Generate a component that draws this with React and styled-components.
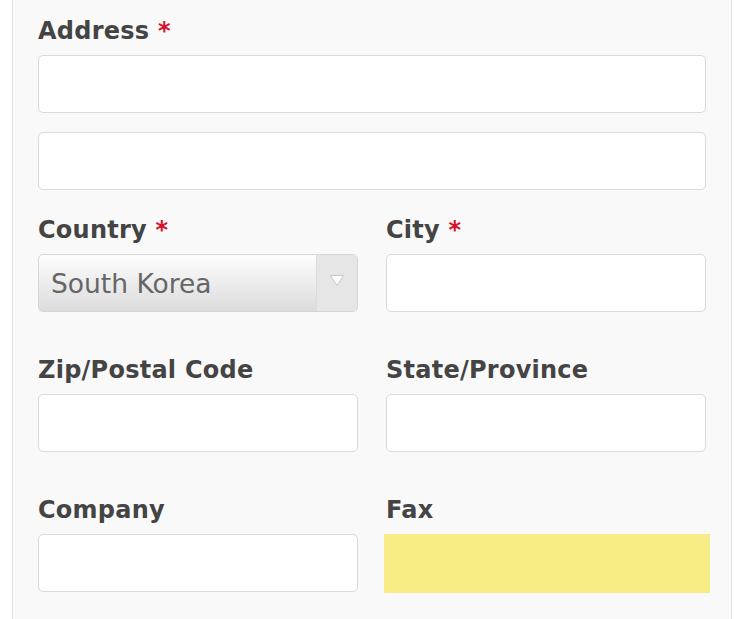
import styled, { createGlobalStyle } from 'styled-components';

const GlobalStyle = createGlobalStyle`
  html, body {
    margin: 0;
    padding: 0;
    background: #fff;
  }
  body {
    font-family: 'DejaVu Sans', Verdana, sans-serif;
  }
`;

export default function App() {
  return (
    <>
      <GlobalStyle />
      <Page>
        <Panel>
          <Group>
            <Label>
              Address <Required>*</Required>
            </Label>
            <Stack>
              <Input type='text' />
              <Input type='text' />
            </Stack>
          </Group>

          <Row>
            <Group>
              <Label>
                Country <Required>*</Required>
              </Label>
              <Select>
                <SelectValue>South Korea</SelectValue>
                <SelectArrow>
                  <svg width='16' height='13' viewBox='0 0 16 13'>
                    <path
                      d='M1.5 1.5h13L8 11.5z'
                      fill='#fff'
                      stroke='#c8c8c8'
                      strokeWidth='1'
                      strokeLinejoin='round'
                    />
                  </svg>
                </SelectArrow>
              </Select>
            </Group>
            <Group>
              <Label>
                City <Required>*</Required>
              </Label>
              <Input type='text' />
            </Group>
          </Row>

          <Row>
            <Group>
              <Label>Zip/Postal Code</Label>
              <Input type='text' />
            </Group>
            <Group>
              <Label>State/Province</Label>
              <Input type='text' />
            </Group>
          </Row>

          <Row>
            <Group>
              <Label>Company</Label>
              <Input type='text' />
            </Group>
            <Group>
              <Label>Fax</Label>
              <Input type='text' $highlight />
            </Group>
          </Row>
        </Panel>
      </Page>
    </>
  );
}

const Page = styled.div`
  display: flex;
  padding: 0 18px 0 12px;
  height: 619px;
  overflow: hidden;
`;

const Panel = styled.div`
  width: 720px;
  box-sizing: border-box;
  background: #f9f9f9;
  border-left: 1px solid #e4e4e4;
  border-right: 1px solid #e4e4e4;
  padding: 12px 25px 0;
  display: flex;
  flex-direction: column;
  gap: 21px;
`;

const Row = styled.div`
  display: grid;
  grid-template-columns: 1fr 1fr;
  column-gap: 28px;
  & + & {
    margin-top: 18px;
  }
`;

const Group = styled.div`
  display: flex;
  flex-direction: column;
  min-width: 0;
`;

const Label = styled.label`
  font-family: 'DejaVu Sans', Verdana, sans-serif;
  font-weight: bold;
  font-size: 24px;
  letter-spacing: 0.25px;
  line-height: 34px;
  color: #444;
  padding-top: 2px;
  margin-bottom: 7px;
`;

const Required = styled.span`
  color: #d8102c;
`;

const Stack = styled.div`
  display: flex;
  flex-direction: column;
  gap: 19px;
`;

const Input = styled.input`
  display: block;
  box-sizing: border-box;
  height: ${({ $highlight }) => ($highlight ? '59px' : '58px')};
  width: ${({ $highlight }) => ($highlight ? 'calc(100% + 6px)' : '100%')};
  margin: 0 0 0 ${({ $highlight }) => ($highlight ? '-2px' : '0')};
  padding: 0 14px;
  font-family: 'DejaVu Sans', Verdana, sans-serif;
  font-size: 23px;
  color: #555;
  background: ${({ $highlight }) => ($highlight ? '#f7ec85' : '#fff')};
  border: ${({ $highlight }) => ($highlight ? '0' : '1.5px solid #dadada')};
  border-radius: ${({ $highlight }) => ($highlight ? '0' : '5px')};
  outline: none;
`;

const Select = styled.div`
  display: flex;
  align-items: stretch;
  box-sizing: border-box;
  height: 58px;
  border: 1.5px solid #d6d6d6;
  border-radius: 5px;
  overflow: hidden;
  background: linear-gradient(#fdfdfd, #dcdcdc);
`;

const SelectValue = styled.div`
  flex: 1;
  display: flex;
  align-items: center;
  padding-left: 12px;
  font-family: 'DejaVu Sans', Verdana, sans-serif;
  font-size: 26.5px;
  color: #666;
`;

const SelectArrow = styled.div`
  width: 40px;
  display: flex;
  align-items: center;
  justify-content: center;
  background: #e6e6e6;
  border-left: 1px solid #dcdcdc;
  padding-bottom: 6px;
`;
